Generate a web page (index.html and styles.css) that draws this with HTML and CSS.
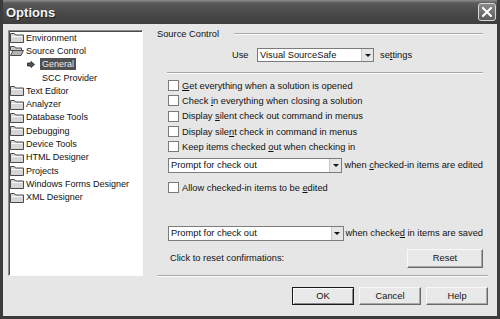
FILE: index.html
```html
<!DOCTYPE html>
<html lang="en">
<head>
    <meta charset="UTF-8">
    <title>Options</title>
    <link rel="stylesheet" href="styles.css">
</head>
<body>
    <div class="window">
        <div class="titlebar">
            <span class="title">Options</span>
            <span class="close">
                <svg width="10" height="10" viewBox="0 0 10 10"><path d="M1 1L9 9M9 1L1 9" stroke="#fff" stroke-width="2" stroke-linecap="square"/></svg>
            </span>
        </div>

        <div class="client">
            <ul class="tree">
                <li class="node"><span class="folder"><svg width="14" height="11" viewBox="0 0 14 11"><path d="M0.5 1.5h4l1 1.5h8v7.5h-13z" fill="#d6d6d6" stroke="#4a4a4a"/><path d="M1.5 4.5h11" stroke="#fafafa"/></svg></span>Environment</li>
                <li class="node"><span class="folder"><svg width="14" height="11" viewBox="0 0 14 11"><path d="M0.5 1.5h4l1 1.5h6v2.5h-11z" fill="#c8c8c8" stroke="#4a4a4a"/><path d="M0.5 10.5l2.5-5h10.5l-2.5 5z" fill="#b4b4b4" stroke="#4a4a4a"/></svg></span>Source Control</li>
                <li class="node child"><span class="pointer"><svg width="8" height="7" viewBox="0 0 8 7"><path d="M0.5 2h3.5v-1.5l3.5 3-3.5 3v-1.5h-3.5z" fill="#555" stroke="#1e1e1e" stroke-width="0.8"/></svg></span><span class="selected">General</span></li>
                <li class="node child"><span class="plain">SCC Provider</span></li>
                <li class="node"><span class="folder"><svg width="14" height="11" viewBox="0 0 14 11"><path d="M0.5 1.5h4l1 1.5h8v7.5h-13z" fill="#d6d6d6" stroke="#4a4a4a"/><path d="M1.5 4.5h11" stroke="#fafafa"/></svg></span>Text Editor</li>
                <li class="node"><span class="folder"><svg width="14" height="11" viewBox="0 0 14 11"><path d="M0.5 1.5h4l1 1.5h8v7.5h-13z" fill="#d6d6d6" stroke="#4a4a4a"/><path d="M1.5 4.5h11" stroke="#fafafa"/></svg></span>Analyzer</li>
                <li class="node"><span class="folder"><svg width="14" height="11" viewBox="0 0 14 11"><path d="M0.5 1.5h4l1 1.5h8v7.5h-13z" fill="#d6d6d6" stroke="#4a4a4a"/><path d="M1.5 4.5h11" stroke="#fafafa"/></svg></span>Database Tools</li>
                <li class="node"><span class="folder"><svg width="14" height="11" viewBox="0 0 14 11"><path d="M0.5 1.5h4l1 1.5h8v7.5h-13z" fill="#d6d6d6" stroke="#4a4a4a"/><path d="M1.5 4.5h11" stroke="#fafafa"/></svg></span>Debugging</li>
                <li class="node"><span class="folder"><svg width="14" height="11" viewBox="0 0 14 11"><path d="M0.5 1.5h4l1 1.5h8v7.5h-13z" fill="#d6d6d6" stroke="#4a4a4a"/><path d="M1.5 4.5h11" stroke="#fafafa"/></svg></span>Device Tools</li>
                <li class="node"><span class="folder"><svg width="14" height="11" viewBox="0 0 14 11"><path d="M0.5 1.5h4l1 1.5h8v7.5h-13z" fill="#d6d6d6" stroke="#4a4a4a"/><path d="M1.5 4.5h11" stroke="#fafafa"/></svg></span>HTML Designer</li>
                <li class="node"><span class="folder"><svg width="14" height="11" viewBox="0 0 14 11"><path d="M0.5 1.5h4l1 1.5h8v7.5h-13z" fill="#d6d6d6" stroke="#4a4a4a"/><path d="M1.5 4.5h11" stroke="#fafafa"/></svg></span>Projects</li>
                <li class="node"><span class="folder"><svg width="14" height="11" viewBox="0 0 14 11"><path d="M0.5 1.5h4l1 1.5h8v7.5h-13z" fill="#d6d6d6" stroke="#4a4a4a"/><path d="M1.5 4.5h11" stroke="#fafafa"/></svg></span>Windows Forms Designer</li>
                <li class="node"><span class="folder"><svg width="14" height="11" viewBox="0 0 14 11"><path d="M0.5 1.5h4l1 1.5h8v7.5h-13z" fill="#d6d6d6" stroke="#4a4a4a"/><path d="M1.5 4.5h11" stroke="#fafafa"/></svg></span>XML Designer</li>
            </ul>

            <div class="main">
                <div class="settings">
                    <div class="group-head">
                        <span>Source Control</span>
                        <span class="etched"></span>
                    </div>

                    <div class="use-row">
                        <span class="use-label">Use</span>
                        <div class="combo small"><span class="combo-text">Visual SourceSafe</span><span class="drop"></span></div>
                        <span class="after">se<u>t</u>tings</span>
                    </div>

                    <div class="etched rule"></div>

                    <div class="checks">
                        <label class="check"><span class="box"></span><span><u>G</u>et everything when a solution is opened</span></label>
                        <label class="check"><span class="box"></span><span>Check <u>i</u>n everything when closing a solution</span></label>
                        <label class="check"><span class="box"></span><span>Display <u>s</u>ilent check out command in menus</span></label>
                        <label class="check"><span class="box"></span><span>Display sile<u>n</u>t check in command in menus</span></label>
                        <label class="check"><span class="box"></span><span>Keep items checked <u>o</u>ut when checking in</span></label>
                    </div>

                    <div class="combo-row first">
                        <div class="combo wide"><span class="combo-text">Prompt for check out</span><span class="drop"></span></div>
                        <span class="after">when <u>c</u>hecked-in items are edited</span>
                    </div>

                    <label class="check allow"><span class="box"></span><span>Allow checked-in items to be <u>e</u>dited</span></label>

                    <div class="combo-row second">
                        <div class="combo wide"><span class="combo-text">Prompt for check out</span><span class="drop"></span></div>
                        <span class="after">when checke<u>d</u> in items are saved</span>
                    </div>

                    <div class="reset-row">
                        <span>Click to reset confirmations:</span>
                        <button class="btn reset">Reset</button>
                    </div>
                </div>

                <div class="etched bottom-rule"></div>

                <div class="buttons">
                    <button class="btn default">OK</button>
                    <button class="btn">Cancel</button>
                    <button class="btn">Help</button>
                </div>
            </div>
        </div>
    </div>
</body>
</html>
```

FILE: styles.css
```css
body {
    margin: 0;
    padding: 0;
    font-family: "Liberation Sans", Arial, sans-serif;
    font-size: 9.3px;
    color: #111;
    background: #e6e6e6;
}
.window {
    width: 500px;
    height: 319px;
    box-sizing: border-box;
    background: #e6e6e6;
    border: 3px solid #3c3c3c;
    border-top: 0;
    overflow: hidden;
}
.titlebar {
    height: 24px;
    margin: 0 -3px;
    display: flex;
    align-items: center;
    justify-content: space-between;
    padding: 0 4px 0 6px;
    background: linear-gradient(#8c8c8c 0, #5a5a5a 3px, #4c4c4c 45%, #3e3e3e 100%);
}
.title {
    color: #f4f4f4;
    font-weight: bold;
    font-size: 13px;
    text-shadow: 1px 1px 0 #222;
}
.close {
    width: 18px;
    height: 18px;
    box-sizing: border-box;
    border: 1px solid #d8d8d8;
    border-radius: 3px;
    background: linear-gradient(#8a8a8a, #5c5c5c);
    display: flex;
    align-items: center;
    justify-content: center;
}
.client {
    display: flex;
    padding: 6px 0 0 5px;
}
.tree {
    list-style: none;
    margin: 0;
    padding: 0 0 0 1px;
    width: 135px;
    height: 246px;
    box-sizing: border-box;
    background: #fff;
    border: 1px solid #fbfbfb;
    border-top-color: #8c8c8c;
    border-left-color: #8c8c8c;
    box-shadow: inset 1px 1px 0 #4a4a4a;
    font-size: 9px;
}
.node {
    display: flex;
    align-items: center;
    height: 13.3px;
    white-space: nowrap;
}
.folder {
    display: flex;
    width: 16px;
}
.child .pointer {
    display: flex;
    margin-left: 17px;
    width: 13px;
}
.selected {
    background: #505050;
    color: #ececec;
    padding: 0 2px;
    line-height: 12px;
}
.plain {
    margin-left: 32px;
}
.main {
    margin-left: 14px;
    width: 331px;
    display: flex;
    flex-direction: column;
}
.settings {
    padding-right: 5px;
}
.etched {
    height: 0;
    border-top: 1px solid #a8a8a8;
    border-bottom: 1px solid #fbfbfb;
}
.group-head {
    margin-top: -2px;
    height: 12px;
    display: flex;
    align-items: center;
}
.group-head .etched {
    flex: 1;
    margin-left: 15px;
}
.use-row {
    margin-top: 8px;
    height: 14px;
    display: flex;
    align-items: center;
    padding-left: 75px;
}
.use-label {
    width: 25px;
}
.combo {
    height: 100%;
    box-sizing: border-box;
    background: #fff;
    border: 1px solid #7c7c7c;
    display: flex;
    align-items: center;
    justify-content: space-between;
}
.combo.small {
    width: 117px;
}
.combo.wide {
    width: 179px;
}
.combo-text {
    padding-left: 2px;
}
.drop {
    width: 12px;
    height: 100%;
    box-sizing: border-box;
    border-left: 1px solid #c8c8c8;
    background: #e6e6e6;
    display: flex;
    align-items: center;
    justify-content: center;
}
.drop::after {
    content: "";
    border-left: 3px solid transparent;
    border-right: 3px solid transparent;
    border-top: 3px solid #111;
}
.after {
    margin-left: 6px;
    white-space: nowrap;
}
.combo-row .after {
    margin-left: 2px;
}
.rule {
    margin: 10px 0 0 10px;
}
.checks {
    margin-top: 4px;
}
.check {
    display: flex;
    align-items: center;
    height: 15.3px;
    margin-left: 11px;
    white-space: nowrap;
}
.box {
    width: 11px;
    height: 11px;
    box-sizing: border-box;
    background: #fff;
    border: 1px solid #7a7a7a;
    margin-right: 3px;
}
.combo-row {
    height: 15px;
    display: flex;
    align-items: center;
    margin-left: 11px;
}
.combo-row.first {
    margin-top: 3.5px;
}
.allow {
    margin-top: 7.3px;
}
.combo-row.second {
    margin-top: 30.3px;
}
.reset-row {
    margin-top: 8px;
    display: flex;
    align-items: center;
    justify-content: space-between;
    padding-left: 13px;
}
.btn {
    font-family: "Liberation Sans", Arial, sans-serif;
    font-size: 9.3px;
    color: #111;
    background: #e9e9e9;
    border: 1px solid #f8f8f8;
    border-right-color: #6a6a6a;
    border-bottom-color: #6a6a6a;
    box-shadow: inset -1px -1px 0 #a8a8a8;
    padding: 0;
    width: 62px;
    height: 18px;
}
.btn.reset {
    width: 76px;
    height: 19px;
}
.btn.default {
    border: 1px solid #1a1a1a;
    box-shadow: inset 1px 1px 0 #fafafa, inset -1px -1px 0 #8a8a8a;
}
.bottom-rule {
    margin-top: 7px;
}
.buttons {
    margin-top: 10px;
    display: flex;
    justify-content: flex-end;
    gap: 5px;
}
```
